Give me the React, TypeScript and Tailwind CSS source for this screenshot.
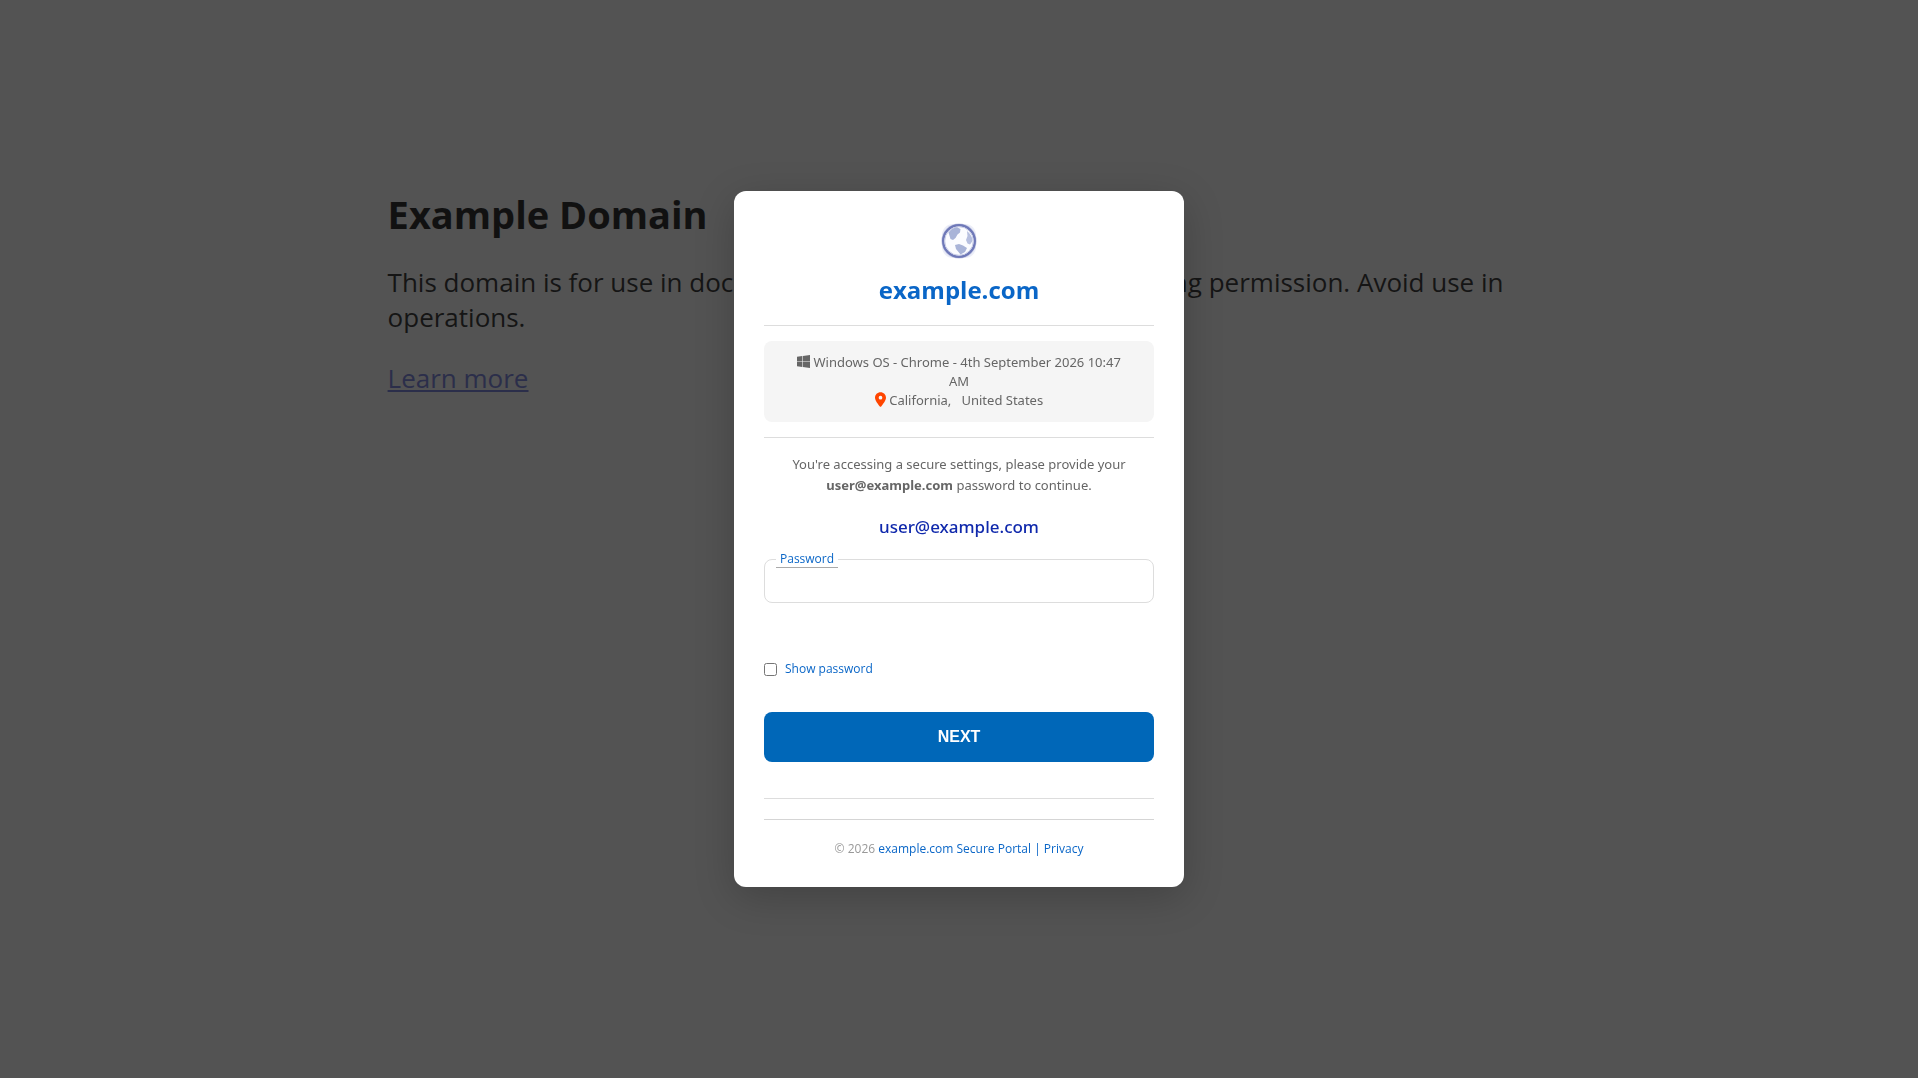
import { useState } from "react";

function GlobeIcon() {
  return (
    <svg viewBox="0 0 36 36" className="h-9 w-9" aria-hidden="true">
      <rect x="1" y="1" width="34" height="34" rx="11" fill="#eceef8" />
      <circle cx="18" cy="18" r="17.600" fill="#c9cde6" />
      <circle cx="18" cy="18" r="15.800" fill="#fbfcff" stroke="#6f79b8" strokeWidth="2.400" />
      <circle cx="18" cy="18" r="14.300" fill="none" stroke="#c9cde6" strokeWidth="1" />
      <path d="M7.500 9.500C9.500 6.500 13 4.500 16 4.300L19.500 6L19 9.500L16.500 11.500L14.500 15L12 17L9.500 16Z" fill="#a9b4d8" />
      <path d="M26 8C29 10.500 31.500 14 31.500 18L29 21.500L26.500 20.500L25 17L26.500 13Z" fill="#b6bfdf" />
      <path d="M14 22L18 21L22 22.500L26 25L24 29L19.500 31.500L17.500 29L15 26Z" fill="#a9b4d8" />
    </svg>
  );
}

function WindowsIcon() {
  return (
    <svg viewBox="0 0 448 512" fill="currentColor" className="inline-block h-[15px] w-[13px] align-[-2px]" aria-hidden="true">
      <path d="M0 93.700l183.600-25.300v177.400H0V93.700zm0 324.600l183.600 25.300V268.400H0v149.900zm203.800 28L448 480V268.400H203.800v177.900zm0-380.600v180.100H448V32L203.800 65.700z" />
    </svg>
  );
}

function PinIcon() {
  return (
    <svg viewBox="0 0 384 512" fill="#ff4500" className="inline-block h-[15px] w-[11px] align-[-2px]" aria-hidden="true">
      <path d="M215.700 499.200C267 435 384 279.400 384 192 384 86 298 0 192 0S0 86 0 192c0 87.400 117 243 168.300 307.200 12.300 15.300 35.100 15.300 47.400 0zM192 128a64 64 0 1 1 0 128 64 64 0 1 1 0-128z" />
    </svg>
  );
}

function BackgroundPage() {
  return (
    <main className="mx-auto w-3/5 px-1 pt-[187px] font-['Open_Sans','Noto_Sans',sans-serif] text-[26px] leading-[35px] text-[#151515]">
      <h1 className="text-[38px] leading-[54px] font-bold text-[#111111]">Example Domain</h1>
      <p className="mt-6">
        This domain is for use in documentation examples without needing permission. Avoid use in operations.
      </p>
      <p className="mt-[26px]">
        <a href="#more" className="text-[#2b2e4a] underline">Learn more</a>
      </p>
    </main>
  );
}

function PasswordDialog() {
  const [visible, setVisible] = useState(false);
  return (
    <section
      role="dialog"
      aria-label="Password"
      className="w-[450px] rounded-xl bg-white px-[30px] pt-8 pb-7 text-center text-xs text-[#666666] shadow-[0_10px_40px_rgba(0,0,0,0.2)]"
    >
      <div className="flex justify-center"><GlobeIcon /></div>
      <h2 className="mt-3 text-2xl leading-[38px] font-bold text-[#0a66c7]">example.com</h2>
      <hr className="mt-4 border-[#dddddd]" />
      <div className="mt-[15px] rounded-lg bg-[#f5f5f5] px-6 py-3 font-['Noto_Sans'] text-[13px] leading-[19px]">
        <p><WindowsIcon /> Windows OS - Chrome - 4th September 2026 10:47 AM</p>
        <p><PinIcon /> California, &nbsp; United States</p>
      </div>
      <hr className="mt-[15px] border-[#dddddd]" />
      <p className="mt-4 px-5 font-['Noto_Sans'] text-[13px] leading-[21px]">
        You're accessing a secure settings, please provide your <b>user@example.com</b> password to continue.
      </p>
      <p className="mt-[19px] font-['Noto_Sans'] text-[17px] leading-6 font-medium text-[#1029ac]">user@example.com</p>
      <form onSubmit={(e) => e.preventDefault()}>
        <div className="relative mt-5">
          <input id="password" type={visible ? "text" : "password"} className="block h-11 w-full rounded-lg border border-[#dddddd] px-4 text-base text-[#333333] outline-none" />
          <label htmlFor="password" className="absolute -top-2 left-3 border-b border-[#aaaaaa] bg-white px-1 leading-4 text-[#0a66c7]">Password</label>
        </div>
        <label className="mt-12 flex h-9 items-center gap-2 text-[#0a66c7]">
          <input type="checkbox" checked={visible} onChange={(e) => setVisible(e.target.checked)} className="h-[13px] w-[13px]" />
          Show password
        </label>
        <button type="submit" className="mt-[25px] h-[50px] w-full rounded-lg bg-[#0067b8] font-['Liberation_Sans'] text-base font-bold text-white">NEXT</button>
      </form>
      <hr className="mt-9 border-[#dddddd]" />
      <hr className="mt-5 border-[#d5d5d5]" />
      <footer className="mt-[19px] leading-5 text-[#999999]">
        © 2026 <span className="text-[#0a66c7]"><a href="#portal">example.com Secure Portal</a> | <a href="#privacy">Privacy</a></span>
      </footer>
    </section>
  );
}

export default function App() {
  return (
    <div className="min-h-screen bg-[#535353]">
      <BackgroundPage />
      <div className="fixed inset-0 flex items-center justify-center font-['Open_Sans','Noto_Sans',sans-serif]">
        <PasswordDialog />
      </div>
    </div>
  );
}
